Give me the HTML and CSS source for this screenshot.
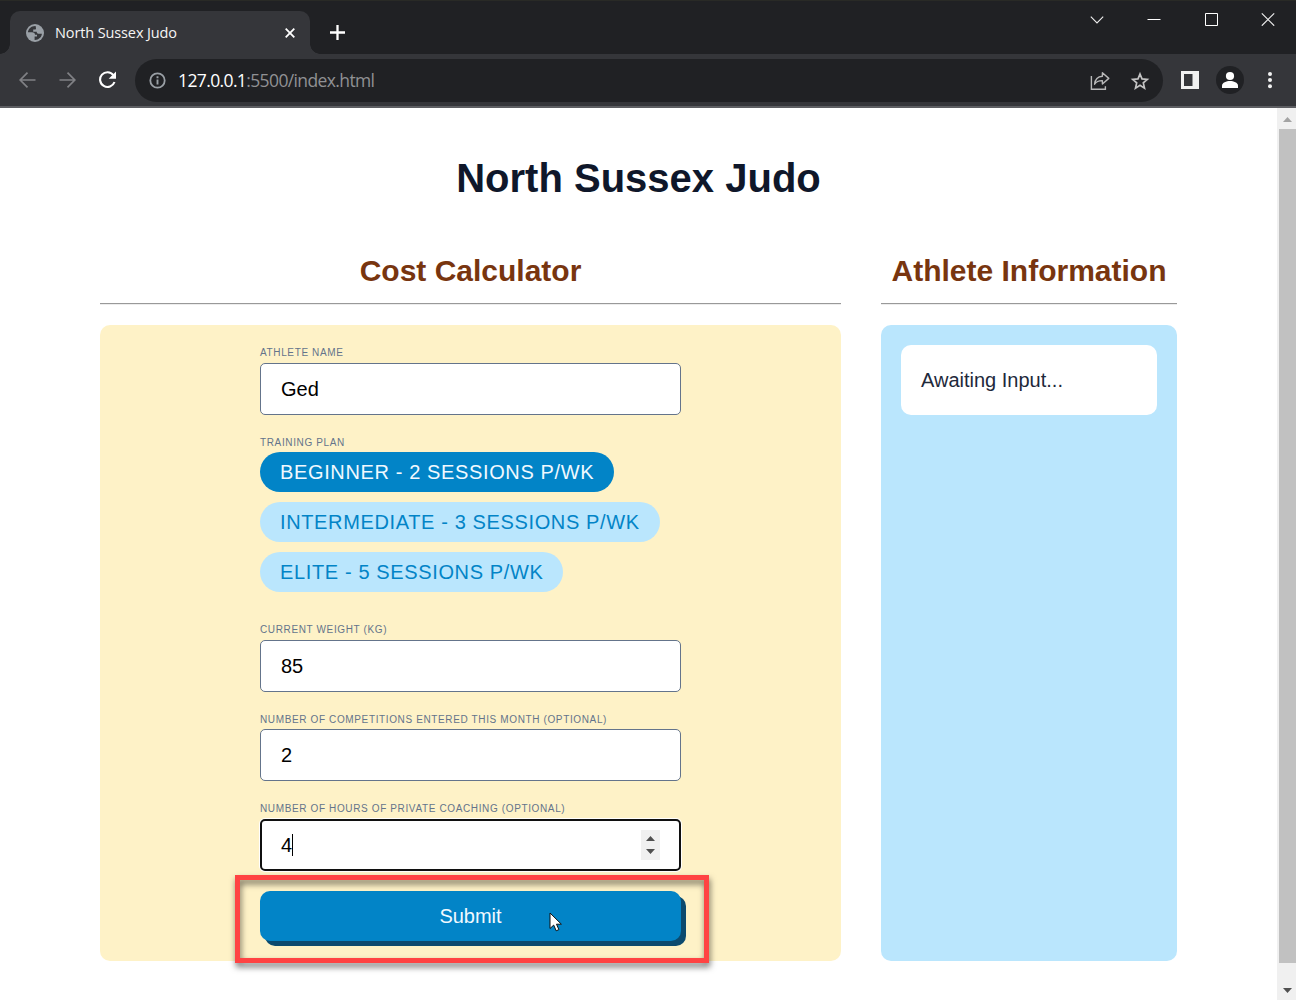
FILE: index.html
```html
<!DOCTYPE html>
<html lang="en">
<head>
<meta charset="utf-8">
<title>North Sussex Judo</title>
<link rel="stylesheet" href="styles.css">
</head>
<body>
<header class="browser">
  <div class="tabstrip">
    <div class="tab">
      <svg class="globe" width="18" height="18" viewBox="0 0 18 18"><circle cx="9" cy="9" r="9" fill="#9aa0a6"/><path fill="#35363a" d="M9.6 1.9C5.4 1.7 2.2 4.7 1.9 8.3H6c2 0 3 1 3 2.4h2v1.8H8.6v3.4c4 .2 7-2.6 7.3-6.1h-3.4c-1.2 0-1.8-.8-1.8-2H7.2V5.6h1.6c.9 0 1.2-.6 1.2-1.4Z"/></svg>
      <span class="tab-title">North Sussex Judo</span>
      <svg class="tab-close" width="12" height="12" viewBox="0 0 12 12"><path d="m1.7 1.7 8.6 8.6m0-8.6-8.6 8.6" stroke="#fff" stroke-width="1.8"/></svg>
    </div>
    <svg class="new-tab" width="15" height="15" viewBox="0 0 15 15"><path d="M7.5 0v15M0 7.5h15" stroke="#fff" stroke-width="2.3"/></svg>
    <div class="window-buttons">
      <svg width="14" height="14" viewBox="0 0 14 14"><path d="m.8 4.7 6.2 6.3 6.2-6.3" fill="none" stroke="#eee" stroke-width="1.1"/></svg>
      <svg width="14" height="14" viewBox="0 0 14 14"><path d="M.5 7.5h13" stroke="#fff"/></svg>
      <svg width="14" height="14" viewBox="0 0 14 14"><path d="M1.5 1.5h12v12h-12z" fill="none" stroke="#fff"/></svg>
      <svg width="14" height="14" viewBox="0 0 14 14"><path d="m.8 1.3 12.4 12.4m0-12.4L.8 13.7" stroke="#eee" stroke-width="1.2"/></svg>
    </div>
  </div>
  <div class="toolbar">
    <svg class="nav-icon" width="18" height="18" viewBox="0 0 18 18"><path d="M17.5 9H2.5M9.5 1.7 2.2 9l7.3 7.3" fill="none" stroke="#808185" stroke-width="1.7"/></svg>
    <svg class="nav-icon" width="18" height="18" viewBox="0 0 18 18"><path d="M1.5 9h15M9.5 1.7 16.8 9l-7.3 7.3" fill="none" stroke="#808185" stroke-width="1.7"/></svg>
    <svg class="nav-icon" width="18" height="18" viewBox="0 0 18 18"><path d="M15.4 4.1A7.4 7.4 0 1 0 16.5 11" fill="none" stroke="#fff" stroke-width="2.1"/><path d="M18 .5v7.3h-7.3z" fill="#fff"/></svg>
    <div class="address">
      <svg width="17" height="17" viewBox="0 0 17 17"><circle cx="8.5" cy="8.5" r="7.2" fill="none" stroke="#9aa0a6" stroke-width="1.8"/><path d="M8.5 7.5v5M8.5 4.3v1.9" stroke="#9aa0a6" stroke-width="1.9"/></svg>
      <span class="url"><span class="host">127.0.0.1</span>:5500/index.html</span>
      <svg class="share" width="20" height="20" viewBox="0 0 20 20"><path d="M1.4 5v13.2h14v-3" fill="none" stroke="#b9b9b9" stroke-width="1.4"/><path d="M12.4 1.8v3.4C7.6 5.5 5.1 8.4 4.6 13.2c1.8-2.7 4.4-3.7 7.8-3.6V13L18.8 7.4Z" fill="none" stroke="#b9b9b9" stroke-width="1.4" stroke-linejoin="round"/></svg>
      <svg class="star" width="20" height="20" viewBox="0 0 20 20"><path d="m10 3 2 4.9 5.3.5-4 3.5 1.2 5.2-4.5-2.8-4.5 2.8 1.2-5.2-4-3.5 5.3-.5Z" fill="none" stroke="#c4c4c4" stroke-width="1.7"/></svg>
    </div>
    <svg class="side-panel" width="18" height="18" viewBox="0 0 18 18"><path d="M0 0h18v18H0zM3 3v12h8.5V3z" fill="#f1f1f1" fill-rule="evenodd"/></svg>
    <svg class="profile" width="28" height="28" viewBox="0 0 28 28"><circle cx="14" cy="14" r="14" fill="#202124"/><circle cx="14" cy="10" r="4.1" fill="#fff"/><path d="M6 22v-2.2c0-3.1 4.5-4.7 8-4.7s8 1.6 8 4.7V22Z" fill="#fff"/></svg>
    <svg class="menu" width="6" height="18" viewBox="0 0 6 18"><g fill="#f1f1f1"><circle cx="3" cy="3" r="2"/><circle cx="3" cy="9" r="2"/><circle cx="3" cy="15.2" r="2"/></g></svg>
  </div>
</header>
<div class="viewport">
  <main class="page">
    <h1 class="title">North Sussex Judo</h1>
    <div class="columns">
      <section>
        <h2 class="heading">Cost Calculator</h2>
        <hr class="rule">
        <div class="card calculator">
          <form class="form">
            <div class="field">
              <label class="label" for="name">Athlete name</label>
              <input class="input" id="name" value="Ged">
            </div>
            <div class="field plans">
              <span class="label">Training plan</span>
              <span class="pill selected">Beginner - 2 sessions p/wk</span>
              <span class="pill">Intermediate - 3 sessions p/wk</span>
              <span class="pill">Elite - 5 sessions p/wk</span>
            </div>
            <div class="field">
              <label class="label" for="weight">Current weight (kg)</label>
              <input class="input" id="weight" value="85">
            </div>
            <div class="field">
              <label class="label tight" for="competitions">Number of competitions entered this month (optional)</label>
              <input class="input" id="competitions" value="2">
            </div>
            <div class="field">
              <span class="label">Number of hours of private coaching (optional)</span>
              <div class="input focused">
                <span class="value">4</span><span class="caret"></span>
                <svg class="spinner" width="19" height="30" viewBox="0 0 19 30"><path d="M0 0h19v30H0z" fill="#f0f0f0"/><path d="m5 11 4.5-5 4.5 5ZM5 19l4.5 5 4.5-5Z" fill="#505050"/></svg>
              </div>
            </div>
            <button class="submit" type="button">Submit</button>
          </form>
          <div class="highlight"></div>
          <svg class="cursor" width="14" height="21" viewBox="0 0 14 21"><path d="M1 1v15.5l3.7-3.4 2.5 5.7 2.7-1.2-2.4-5.4h4.9Z" fill="#fff" stroke="#111" stroke-width="1"/></svg>
        </div>
      </section>
      <section>
        <h2 class="heading">Athlete Information</h2>
        <hr class="rule">
        <div class="card info">
          <p class="message">Awaiting Input...</p>
        </div>
      </section>
    </div>
  </main>
  <div class="scrollbar">
    <svg width="17" height="21" viewBox="0 0 17 21"><path d="m4 14 4.5-5 4.5 5Z" fill="#a3a3a3"/></svg>
    <div class="thumb"></div>
    <svg width="17" height="37" viewBox="0 0 17 37"><path d="m4 25 4.5 5 4.5-5Z" fill="#505050"/></svg>
  </div>
</div>
</body>
</html>
```
FILE: styles.css
```css
* { box-sizing: border-box; }
body {
  margin: 0;
  width: 1296px;
  height: 1000px;
  overflow: hidden;
  background: #fff;
  font-family: "Liberation Sans", Arial, sans-serif;
}
svg { display: block; flex: none; }

.browser { height: 108px; background: #35363a; border-bottom: 2px solid #5d5e62; font-family: "Open Sans", "Noto Sans", sans-serif; }
.tabstrip { height: 54px; background: #202124; display: flex; align-items: flex-start; border-top: 1px solid #292a26; }
.tab {
  position: relative;
  width: 300px;
  height: 43px;
  margin: 10px 0 0 10px;
  padding: 0 14px 0 16px;
  display: flex;
  align-items: center;
  background: #35363a;
  border-radius: 10px 10px 0 0;
}
.tab::before, .tab::after { content: ""; position: absolute; bottom: 0; width: 10px; height: 10px; }
.tab::before { left: -10px; background: radial-gradient(circle at 0 0, #202124 9.5px, #35363a 10px); }
.tab::after { right: -10px; background: radial-gradient(circle at 100% 0, #202124 9.5px, #35363a 10px); }
.tab-title { margin-left: 11px; flex: 1; font-size: 14.5px; letter-spacing: -.12px; color: #f5f5f5; line-height: 20px; white-space: nowrap; }
.new-tab { margin: 24px 0 0 20px; }
.window-buttons { margin: 11px 21px 0 auto; display: flex; gap: 43px; }

.toolbar { height: 52px; padding: 0 23px 0 18px; display: flex; align-items: center; }
.nav-icon { margin-right: 22px; }
.nav-icon:nth-child(3) { margin-right: 19px; }
.address { flex: none; width: 1028px; height: 43px; margin-top: 1px; padding: 0 13px 0 14px; display: flex; align-items: center; background: #202124; border-radius: 22px; }
.url { margin: -1px 0 0 12px; flex: 1; font-size: 17.5px; letter-spacing: -.62px; color: #909194; white-space: nowrap; }
.host { color: #fff; }
.star { margin-left: 20px; }
.side-panel { margin-left: 18px; }
.profile { margin-left: 17px; }
.menu { margin-left: 23px; }

.viewport { height: 892px; display: flex; }
.page { width: 1277px; padding: 47px 100px 0; }
.title { margin: 0; text-align: center; font-size: 40px; line-height: 46px; color: #0f172a; }
.columns { margin-top: 52px; display: grid; grid-template-columns: 741px 296px; gap: 40px; }
.heading { margin: 0; height: 50px; text-align: center; font-size: 30px; line-height: 35px; color: #78350f; white-space: nowrap; }
.rule { margin: 0 0 20px; height: 2px; border: 0; border-top: 1px solid #999; border-bottom: 1px solid #ededed; }
.card { height: 636px; padding: 20px; border-radius: 10px; }
.calculator { position: relative; background: #fef2c7; }
.info { background: #bae6fd; }
.message { margin: 0; padding: 20px; border-radius: 10px; background: #fff; color: #1e293b; font-size: 20px; line-height: 30px; }

.form { width: 421px; margin: 0 auto; }
.field { display: flex; flex-direction: column; align-items: flex-start; margin-bottom: 20px; }
.label { height: 18px; line-height: 15px; font-size: 10px; letter-spacing: .63px; text-transform: uppercase; color: #64748b; white-space: nowrap; }
.input {
  width: 100%;
  height: 52px;
  padding: 0 20px;
  border: 1px solid #64748b;
  border-radius: 5px;
  background: #fff;
  color: #000;
  font: 20px "Liberation Sans", Arial, sans-serif;
}
.plans .label, .tight { height: 17px; }
.pill { height: 40px; margin-bottom: 10px; padding: 0 20px; border-radius: 20px; background: #bae6fd; color: #0284c7; font-size: 20px; line-height: 40px; letter-spacing: .63px; text-transform: uppercase; white-space: nowrap; }
.selected { background: #0284c7; color: #f0f9ff; }
.focused { padding: 0 19px; display: flex; align-items: center; border: 2px solid #101010; box-shadow: 0 0 0 1px #fff; }
.value { padding-top: 1px; }
.caret { width: 1px; height: 22px; background: #000; }
.spinner { margin-left: auto; }
.submit { display: block; width: 421px; height: 50px; padding: 1px 0 0; border: 0; border-radius: 10px; background: #0284c7; box-shadow: 5px 5px 0 #0c4a6e; color: #f0f9ff; font: 20px "Liberation Sans", Arial, sans-serif; }
.highlight { position: absolute; left: 135px; top: 550px; width: 474px; height: 88px; border: 5px solid #ff4343; filter: drop-shadow(1px 4px 3px rgba(0, 0, 0, .55)); }
.cursor { position: absolute; left: 449px; top: 587px; }

.scrollbar { width: 19px; padding-left: 2px; background: #f0f0f0; }
.thumb { height: 834px; background: #c1c1c1; }
```
